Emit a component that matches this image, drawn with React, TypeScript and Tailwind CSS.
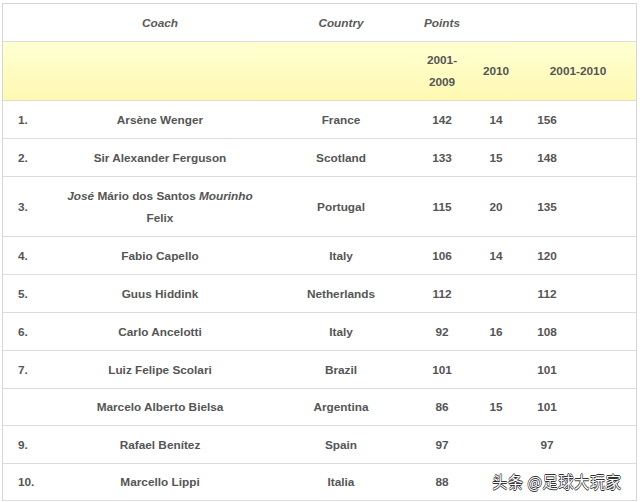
import React from 'react';

type Row = {
  rank: string;
  coach: React.ReactNode;
  country: string;
  p1: string;
  p2: string;
  p3: string;
  tall?: boolean;
};

const rows: Row[] = [
  { rank: '1.', coach: 'Arsène Wenger', country: 'France', p1: '142', p2: '14', p3: '156' },
  { rank: '2.', coach: 'Sir Alexander Ferguson', country: 'Scotland', p1: '133', p2: '15', p3: '148' },
  {
    rank: '3.',
    coach: (
      <>
        <i>José</i> Mário dos Santos <i>Mourinho</i>
        <br />
        Felix
      </>
    ),
    country: 'Portugal',
    p1: '115',
    p2: '20',
    p3: '135',
    tall: true,
  },
  { rank: '4.', coach: 'Fabio Capello', country: 'Italy', p1: '106', p2: '14', p3: '120' },
  { rank: '5.', coach: 'Guus Hiddink', country: 'Netherlands', p1: '112', p2: '', p3: '112' },
  { rank: '6.', coach: 'Carlo Ancelotti', country: 'Italy', p1: '92', p2: '16', p3: '108' },
  { rank: '7.', coach: 'Luiz Felipe Scolari', country: 'Brazil', p1: '101', p2: '', p3: '101' },
  { rank: '', coach: 'Marcelo Alberto Bielsa', country: 'Argentina', p1: '86', p2: '15', p3: '101' },
  { rank: '9.', coach: 'Rafael Benítez', country: 'Spain', p1: '97', p2: '', p3: '97' },
  { rank: '10.', coach: 'Marcello Lippi', country: 'Italia', p1: '88', p2: '', p3: '' },
];

const grid = 'grid grid-cols-[57px_200px_162px_40px_68px_34px_1fr] items-center border-b border-[#dcdcdc]';

export default function App() {
  return (
    <div
      className="relative w-[640px] h-[502px] bg-white pt-[3px] pl-[2px] text-[11.8px] font-bold text-[#555555] leading-[22px]"
      style={{ fontFamily: '"Liberation Sans", Arial, sans-serif' }}
    >
      <div className="w-[635px] border-l border-r border-t border-[#d6d6d6]">
        {/* header */}
        <div className={`${grid} h-[38px] italic text-[#5a5a5a]`}>
          <div />
          <div className="text-center">Coach</div>
          <div className="text-center">Country</div>
          <div className="text-center whitespace-nowrap">Points</div>
          <div />
          <div />
          <div />
        </div>
        {/* sub header */}
        <div className={`${grid} h-[59px] bg-gradient-to-b from-[#ffffd2] to-[#fff9b2] border-[#e2dfc0]`}>
          <div />
          <div />
          <div />
          <div className="text-center">
            2001-
            <br />
            2009
          </div>
          <div className="text-center">2010</div>
          <div className="col-span-2 text-center pr-[10px]">2001-2010</div>
        </div>
        {rows.map((r, i) => (
          <div key={i} className={`${grid} ${r.tall ? 'h-[60px]' : i === 7 || i === 9 ? 'h-[37px]' : 'h-[38px]'}`}>
            <div className="pl-[15px]">{r.rank}</div>
            <div className="text-center">{r.coach}</div>
            <div className="text-center">{r.country}</div>
            <div className="text-center">{r.p1}</div>
            <div className="text-center">{r.p2}</div>
            <div className="text-center">{r.p3}</div>
            <div />
          </div>
        ))}
      </div>
      <div
        className="absolute left-[492px] top-[470px] text-[15.5px] font-normal text-white leading-[22px] tracking-[0.3px] [text-shadow:-0.6px_0_0_#333,0.6px_0_0_#333,0_-0.6px_0_#333,0_0.6px_0_#333]"
        style={{ fontFamily: '"Noto Sans CJK SC", sans-serif' }}
      >
        头条 @足球大玩家
      </div>
    </div>
  );
}
